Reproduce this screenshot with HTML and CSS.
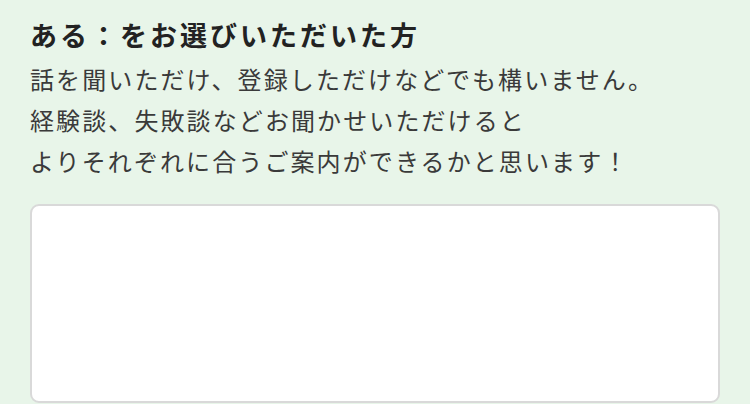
FILE: index.html
```html
<!DOCTYPE html>
<html lang="ja">
<head>
<meta charset="utf-8">
<link rel="stylesheet" href="styles.css">
</head>
<body>
<section class="question">
  <h2 class="question-title">ある：をお選びいただいた方</h2>
  <p class="question-text">話を聞いただけ、登録しただけなどでも構いません。<br>経験談、失敗談などお聞かせいただけると<br>よりそれぞれに合うご案内ができるかと思います！</p>
  <textarea class="answer"></textarea>
</section>
</body>
</html>
```

FILE: styles.css
```css
html, body {
  margin: 0;
  padding: 0;
  background: #e8f5e9;
}

body {
  font-family: "Noto Sans CJK JP", "Noto Sans", sans-serif;
  height: 404px;
  overflow: hidden;
}

.question {
  padding: 16px 30px 0;
  display: flex;
  flex-direction: column;
}

.question-title {
  margin: 0;
  font-size: 27px;
  line-height: 37px;
  font-weight: 700;
  letter-spacing: 3px;
  color: #222;
}

.question-text {
  margin: 5px 0 0;
  font-size: 24px;
  line-height: 41px;
  font-weight: 400;
  letter-spacing: 2.1px;
  color: #3a3a3a;
}

.answer {
  margin-top: 23px;
  box-sizing: border-box;
  width: 690px;
  height: 199px;
  border: 2px solid #d9d9d9;
  border-radius: 9px;
  background: #fff;
  resize: none;
  outline: none;
  font-family: inherit;
}
```
